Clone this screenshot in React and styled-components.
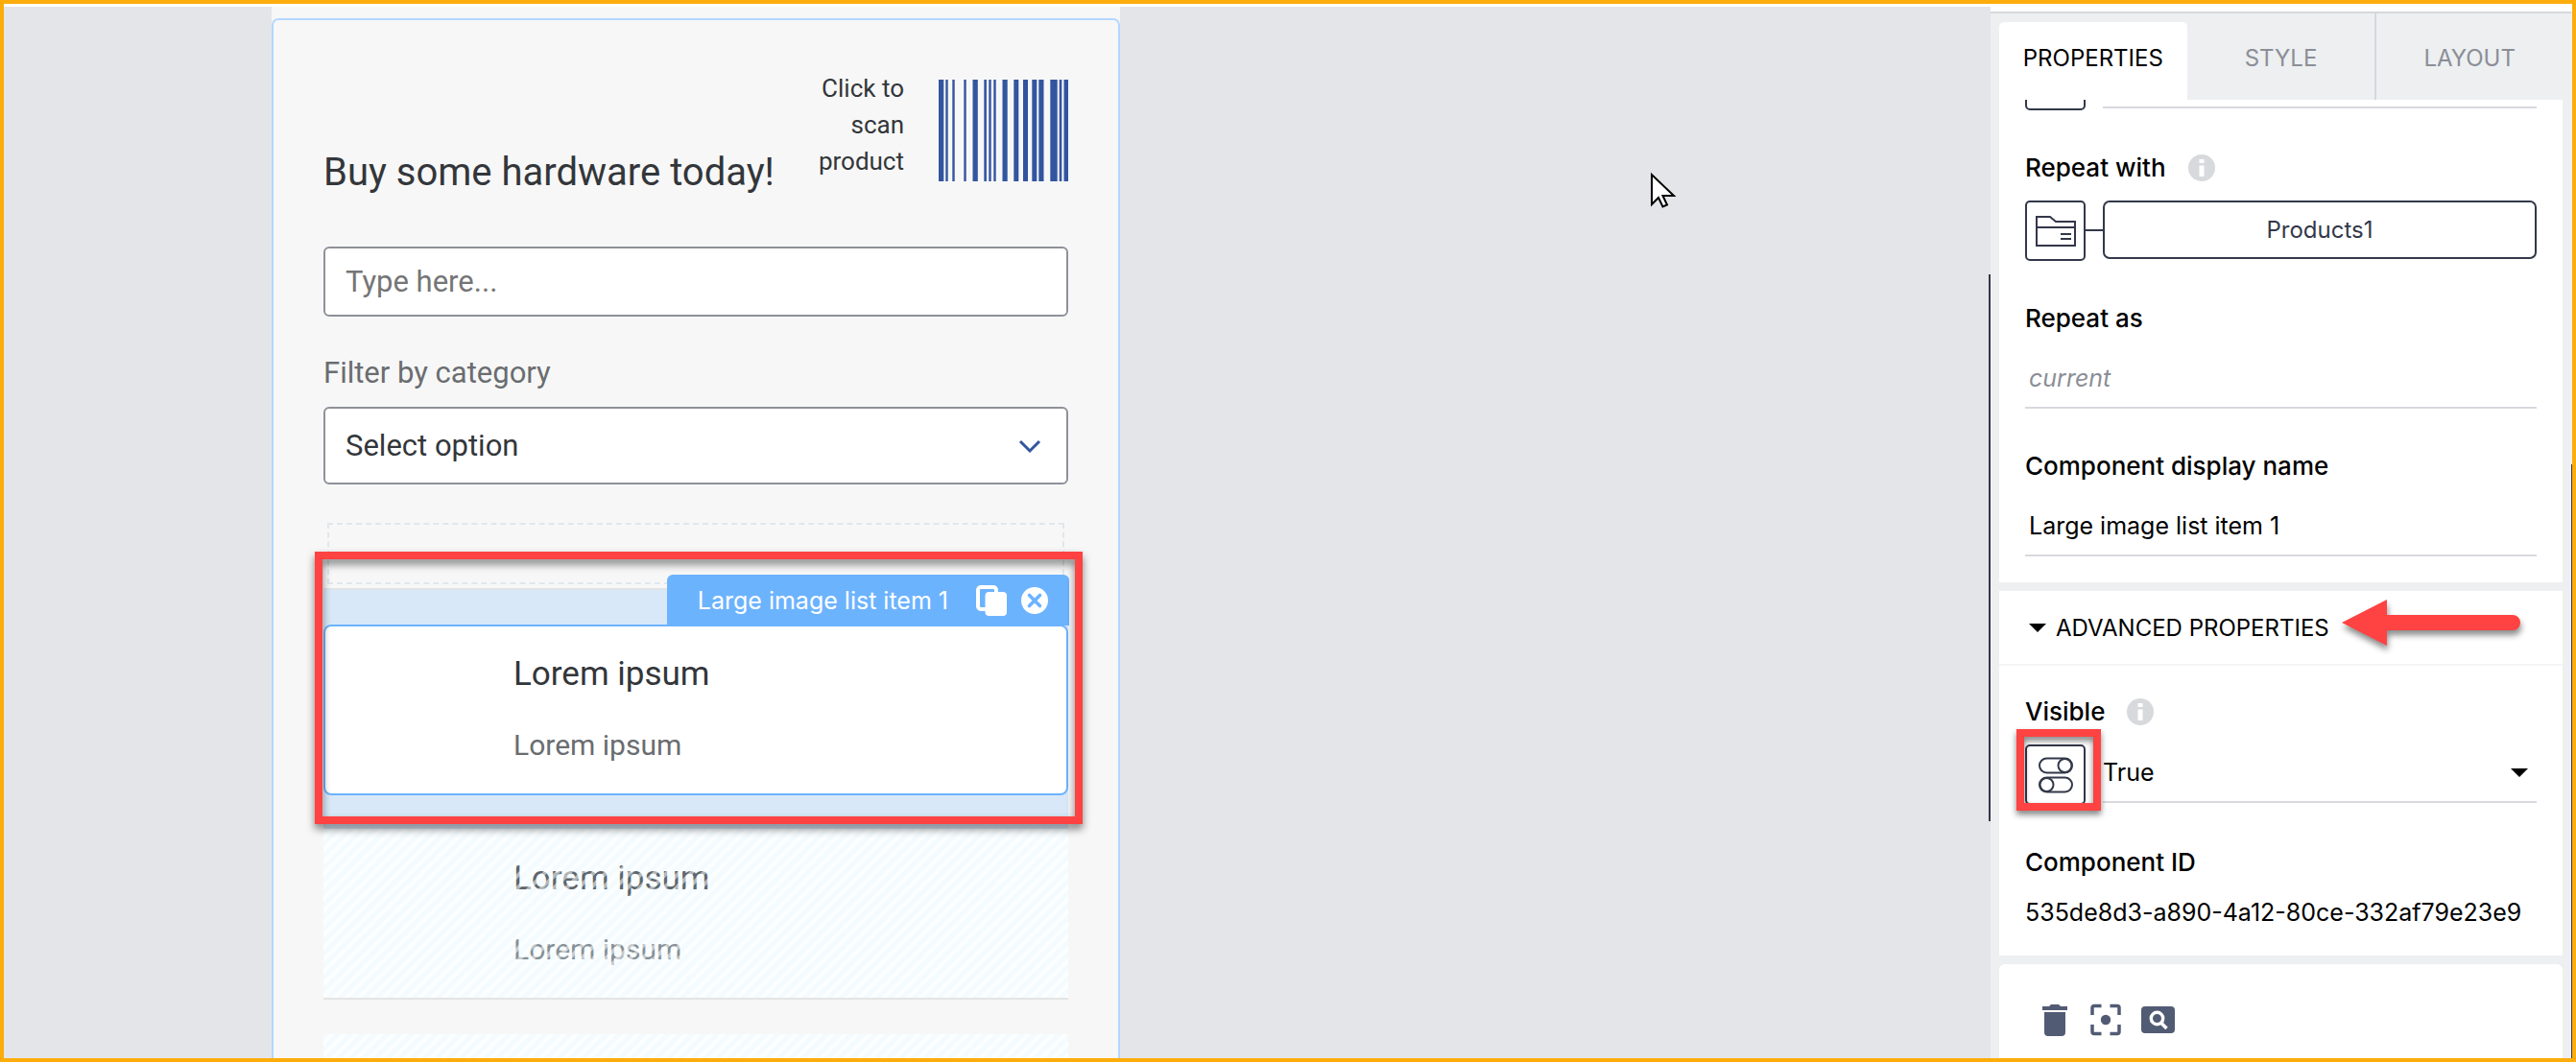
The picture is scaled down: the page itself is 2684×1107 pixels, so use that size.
import React from "react";
import styled, { createGlobalStyle, css } from "styled-components";

const ink = "#33384a";
const line = "#d8d9df";
const red = "#ff4242";
const sky = "#6cb3fe";

const GlobalStyle = createGlobalStyle`
  *, *::before, *::after { box-sizing: border-box; }
  body { margin: 0; }
  button, input, select { font: inherit; color: inherit; margin: 0; }
  h1, h2, p { margin: 0; font-weight: 400; }
`;

const Frame = styled.div`
  display: flex;
  height: 100vh;
  overflow: hidden;
  border: 4px solid #fcad0b;
  background: #fff;
`;

/* ---------- Canvas with the phone preview ---------- */

const Canvas = styled.main`
  position: relative;
  flex: 1;
  min-width: 0;
  display: flex;
  justify-content: space-between;
  padding-left: 279px;
  border-top: 3px solid #fff;
  background: #e4e5e9;
  font-family: Roboto, "Liberation Sans", sans-serif;
  overflow: hidden;
`;

const Device = styled.div`
  width: 884px;
  flex-shrink: 0;
  padding-top: 12px;
  background: #f7f7f7;
`;

const Screen = styled.section`
  padding: 52px 52px 0;
  border: 2px solid #b3d7ff;
  border-radius: 7px;
`;

const CanvasThumb = styled.div`
  width: 2px;
  height: 570px;
  margin-top: 279px;
  background: ${ink};
`;

const Pointer = styled.svg`
  position: absolute;
  left: 1715px;
  top: 172px;
  width: 28px;
  height: 40px;
`;

const ScreenHeader = styled.header`
  display: flex;
  align-items: flex-end;
  min-height: 131px;
  margin-bottom: 53px;
`;

const Heading = styled.h1`
  flex: 1;
  font-size: 40px;
  line-height: 48px;
  white-space: nowrap;
  color: #33363a;
`;

const ScanButton = styled.button`
  display: flex;
  align-items: flex-start;
  align-self: flex-start;
  gap: 36px;
  padding: 0;
  border: 0;
  background: none;
  font-size: 26px;
  line-height: 38px;
  text-align: right;
  color: #33363a;
`;

const ScanText = styled.span`
  width: 104px;
`;

const Barcode = styled.svg`
  width: 135px;
  height: 106px;
  margin-top: 10px;
  fill: #32559f;
`;

const boxed = css`
  width: 100%;
  padding: 0 21px;
  border: 2px solid #8e9199;
  border-radius: 6px;
  background: #fff;
  font-size: 31px;
`;

const SearchBox = styled.input`
  ${boxed}
  display: block;
  height: 73px;
  margin-bottom: 39px;
  &::placeholder { color: #757575; opacity: 1; }
`;

const FilterLabel = styled.label`
  display: block;
  margin-bottom: 15px;
  font-size: 31px;
  line-height: 40px;
  color: #6a6d70;
`;

const SelectWrap = styled.div`
  display: grid;
  align-items: center;
  margin-bottom: 40px;
  > * { grid-area: 1 / 1; }
`;

const FilterSelect = styled.select`
  ${boxed}
  height: 81px;
  appearance: none;
  color: #33363a;
`;

const Chevron = styled.svg`
  justify-self: end;
  width: 24px;
  height: 16px;
  margin-right: 28px;
  fill: none;
  stroke: #32559f;
  stroke-width: 3;
  pointer-events: none;
`;

const DropZone = styled.div`
  height: 64px;
  margin: 0 4px 4px;
  border: 2px dashed #dfe7ec;
`;

const List = styled.div`
  display: flex;
  flex-direction: column;
`;

const Selection = styled.div`
  position: relative;
  z-index: 1;
  padding: 36px 0 35px;
  border-top: 2px solid #e0e4e7;
  background: #d8e8f8;
`;

const Highlight = styled.div`
  position: absolute;
  inset: -40px -15px 5px -9px;
  border: 8px solid ${red};
  filter: drop-shadow(0 5px 4px rgba(0, 0, 0, 0.5));
  pointer-events: none;
`;

const Chip = styled.div`
  position: absolute;
  top: -16px;
  right: -1px;
  display: flex;
  align-items: center;
  height: 53px;
  padding: 0 22px 0 32px;
  border-radius: 6px 6px 0 0;
  background: ${sky};
  color: #fff;
  font-family: Inter, "Liberation Sans", sans-serif;
  font-size: 25px;
  white-space: nowrap;
`;

const ChipButton = styled.button`
  display: flex;
  margin-left: ${(p) => (p.$first ? 29 : 15)}px;
  padding: 0;
  border: 0;
  background: none;
`;

const Item = styled.article`
  position: relative;
  height: 178px;
  padding: 28px 0 0 198px;
  background: #fff;
  ${(p) =>
    p.$selected
      ? css`
          border-radius: 8px;
          box-shadow: inset 0 0 0 2px ${sky};
        `
      : css`
          margin-bottom: 36px;
          border-bottom: 2px solid #e4e4e4;
          &::after {
            content: "";
            position: absolute;
            inset: 0;
            background: repeating-linear-gradient(
              135deg,
              rgba(214, 240, 252, 0.26) 0 4px,
              rgba(250, 254, 255, 0.64) 5px 8px,
              rgba(214, 240, 252, 0.26) 9px
            );
          }
        `}
`;

const ItemTitle = styled.h2`
  margin-bottom: 30px;
  font-size: 35px;
  line-height: 48px;
  color: #33363a;
`;

const ItemText = styled.p`
  font-size: 30px;
  line-height: 40px;
  color: #6a6d70;
`;

/* ---------- Properties panel ---------- */

const Panel = styled.aside`
  display: flex;
  flex-shrink: 0;
  width: 606px;
  border-top: 8px solid #fff;
  background: #edeff1;
  font-family: Inter, "Liberation Sans", sans-serif;
  font-size: 25px;
  color: #000;
`;

const PanelBody = styled.div`
  flex: 1;
  min-width: 0;
  display: flex;
  flex-direction: column;
  padding: 0 9px;
  border-top: 2px solid #d6d8dc;
`;

const PanelThumb = styled.div`
  width: 1px;
  margin-top: 472px;
  background: ${ink};
`;

const Tabs = styled.nav`
  display: grid;
  grid-template-columns: repeat(3, 1fr);
  flex-shrink: 0;
  height: 90px;
`;

const Tab = styled.button`
  padding: 2px 0 0;
  border: 0;
  background: none;
  font-size: 24px;
  color: #8b8e96;
  & + & + & { border-left: 2px solid #d6d8dc; }
  ${(p) =>
    p.$active &&
    css`
      margin-top: 9px;
      padding: 0 0 6px;
      border-radius: 5px 5px 0 0;
      background: #fff;
      color: #000;
    `}
`;

const Card = styled.section`
  flex-shrink: 0;
  margin-bottom: 9px;
  padding-bottom: 27px;
  background: #fff;
`;

const FieldGroup = styled.div`
  display: flex;
  flex-direction: column;
  gap: 44px;
  padding: ${(p) => p.$top}px 27px 0;
`;

const ScrolledRow = styled.div`
  display: flex;
  align-items: flex-end;
  height: 11px;
  overflow: hidden;
`;

const FieldHead = styled.div`
  display: flex;
  align-items: center;
  gap: 23px;
  height: 32px;
  margin-bottom: 18px;
`;

const labelText = css`
  font-size: 26px;
  font-weight: 500;
  line-height: 32px;
`;

const FieldLabel = styled.label`${labelText}`;
const FieldName = styled.span`${labelText}`;

const InfoIcon = styled.svg`
  width: 28px;
  height: 28px;
  fill: #d8d9dd;
`;

const ValueRow = styled.div`
  display: flex;
  flex: 1;
  align-items: flex-start;
  height: 63px;
`;

const KindButton = styled.button`
  position: relative;
  display: flex;
  align-items: center;
  justify-content: center;
  flex-shrink: 0;
  width: 63px;
  height: 63px;
  padding: 0;
  border: 2px solid ${ink};
  border-radius: 5px;
  background: #fff;
`;

const Link = styled.div`
  width: 18px;
  height: 2px;
  margin-top: 30px;
  background: ${(p) => (p.$on ? ink : "transparent")};
`;

const KindMark = styled.div`
  position: absolute;
  inset: -18px -18px -8px -11px;
  border: 8px solid ${red};
  filter: drop-shadow(0 4px 3px rgba(0, 0, 0, 0.5));
  pointer-events: none;
`;

const BindingButton = styled.button`
  flex: 1;
  height: 61px;
  padding: 0;
  border: 2px solid ${ink};
  border-radius: 7px;
  background: #fff;
  font-size: 24px;
  color: ${ink};
`;

const Underlined = styled.div`
  flex: 1;
  display: grid;
  align-items: center;
  height: 61px;
  border-bottom: 2px solid ${line};
  > * { grid-area: 1 / 1; }
`;

const PlainSelect = styled.select`
  width: 100%;
  height: 59px;
  padding: 0 0 2px;
  border: 0;
  background: none;
  appearance: none;
`;

const Caret = styled.svg`
  justify-self: end;
  width: 18px;
  height: 9px;
  margin-right: ${(p) => (p.$inSelect ? 9 : 0)}px;
  pointer-events: none;
`;

const TextField = styled.input`
  display: block;
  width: 100%;
  height: 60px;
  padding: 0 4px 2px;
  border: 0;
  border-bottom: 2px solid ${line};
  background: none;
  &::placeholder { color: #8b8e96; font-style: italic; opacity: 1; }
`;

const SectionToggle = styled.button`
  position: relative;
  display: flex;
  align-items: center;
  gap: 10px;
  width: 100%;
  height: 78px;
  padding: 0 31px;
  border: 0;
  border-bottom: 2px solid #f4f5f6;
  background: none;
  font-size: 24px;
`;

const Arrow = styled.svg`
  position: absolute;
  top: 5px;
  left: 353px;
  width: 200px;
  height: 62px;
  filter: drop-shadow(1px 5px 3px rgba(0, 0, 0, 0.45));
`;

const IdText = styled.p`
  line-height: 36px;
  white-space: nowrap;
`;

const ActionBar = styled.footer`
  flex: 1;
  display: flex;
  align-items: flex-start;
  gap: 19px;
  padding: 38px 41px 0;
  border-radius: 6px 6px 0 0;
  background: #fff;
`;

const ActionButton = styled.button`
  display: flex;
  padding: 0;
  border: 0;
  background: none;
  color: #525b74;
`;

const bars = [
  [0, 5.3], [7.3, 2.4], [14.3, 2.4], [26.3, 2.4], [35.5, 5.3], [47.3, 2.6],
  [52.3, 2.4], [57.3, 2.4], [66.5, 5.2], [78.3, 5], [88, 5], [97.3, 5],
  [104.3, 5.2], [116.3, 7.4], [125.7, 2.6], [130.5, 4.5],
];

const Info = () => (
  <InfoIcon viewBox="0 0 28 28" aria-hidden="true">
    <circle cx="14" cy="14" r="14" />
    <path fill="#fff" d="M11.5 5h5v4h-5zM11.5 11.5h5V23h-5z" />
  </InfoIcon>
);

const Triangle = ({ inSelect }) => (
  <Caret viewBox="0 0 18 9" $inSelect={inSelect} aria-hidden="true">
    <path d="M0 0h18L9 9z" />
  </Caret>
);

const ListItem = ({ selected, title, text }) => (
  <Item $selected={selected}>
    <ItemTitle>{title}</ItemTitle>
    <ItemText>{text}</ItemText>
  </Item>
);

const PhonePreview = () => (
  <Device>
    <Screen>
      <ScreenHeader>
        <Heading>Buy some hardware today!</Heading>
        <ScanButton type="button">
          <ScanText>Click to scan product</ScanText>
          <Barcode viewBox="0 0 135 106" aria-hidden="true">
            {bars.map(([x, w]) => (
              <rect key={x} x={x} width={w} height="106" />
            ))}
          </Barcode>
        </ScanButton>
      </ScreenHeader>
      <SearchBox type="text" placeholder="Type here..." aria-label="Search" />
      <FilterLabel htmlFor="category">Filter by category</FilterLabel>
      <SelectWrap>
        <FilterSelect id="category">
          <option>Select option</option>
        </FilterSelect>
        <Chevron viewBox="0 0 24 16" aria-hidden="true">
          <path d="M2 3l10 10L22 3" />
        </Chevron>
      </SelectWrap>
      <DropZone />
      <List>
        <Selection>
          <ListItem selected title="Lorem ipsum" text="Lorem ipsum" />
          <Chip>
            Large image list item 1
            <ChipButton type="button" $first aria-label="Duplicate">
              <svg width="32" height="32" viewBox="0 0 32 32">
                <path
                  fill="none"
                  stroke="#fff"
                  strokeWidth="4"
                  d="M10 25H5a3 3 0 0 1-3-3V5a3 3 0 0 1 3-3h13a3 3 0 0 1 3 3v4"
                />
                <rect x="9.500" y="7" width="22.500" height="25" rx="4" fill="#fff" />
              </svg>
            </ChipButton>
            <ChipButton type="button" aria-label="Remove">
              <svg width="28" height="28" viewBox="0 0 28 28">
                <circle cx="14" cy="14" r="14" fill="#fff" />
                <path
                  d="M8.500 8.500l11 11m0-11l-11 11"
                  stroke={sky}
                  strokeWidth="3.600"
                  strokeLinecap="round"
                />
              </svg>
            </ChipButton>
          </Chip>
          <Highlight />
        </Selection>
        <ListItem title="Lorem ipsum" text="Lorem ipsum" />
        <ListItem />
      </List>
    </Screen>
  </Device>
);

export default function App() {
  return (
    <>
      <GlobalStyle />
      <Frame>
        <Canvas>
          <PhonePreview />
          <CanvasThumb />
          <Pointer viewBox="0 0 28 40" aria-hidden="true">
            <path
              d="M2 3v31l7-7 4.500 9.500 4.500-2-4.500-9.500H25z"
              fill="#fff"
              stroke="#000"
              strokeWidth="2"
            />
          </Pointer>
        </Canvas>

        <Panel>
          <PanelBody>
            <Tabs>
              <Tab type="button" $active>PROPERTIES</Tab>
              <Tab type="button">STYLE</Tab>
              <Tab type="button">LAYOUT</Tab>
            </Tabs>

            <Card>
              <FieldGroup $top={0}>
                <ScrolledRow>
                  <ValueRow>
                    <KindButton type="button" aria-label="Binding type" />
                    <Link />
                    <Underlined />
                  </ValueRow>
                </ScrolledRow>
                <div>
                  <FieldHead>
                    <FieldName>Repeat with</FieldName>
                    <Info />
                  </FieldHead>
                  <ValueRow>
                    <KindButton type="button" aria-label="Data variable">
                      <svg width="42" height="34" viewBox="0 0 42 34" fill="none" stroke={ink} strokeWidth="2">
                        <path d="M1 32V2h14l6 5h20v25zM1 13h40M26 20h11M26 25h11" />
                      </svg>
                    </KindButton>
                    <Link $on />
                    <BindingButton type="button">Products1</BindingButton>
                  </ValueRow>
                </div>
                <div>
                  <FieldHead>
                    <FieldLabel htmlFor="repeat-as">Repeat as</FieldLabel>
                  </FieldHead>
                  <TextField id="repeat-as" type="text" placeholder="current" />
                </div>
                <div>
                  <FieldHead>
                    <FieldLabel htmlFor="display-name">Component display name</FieldLabel>
                  </FieldHead>
                  <TextField id="display-name" type="text" defaultValue="Large image list item 1" />
                </div>
              </FieldGroup>
            </Card>

            <Card>
              <SectionToggle type="button">
                <Triangle />
                ADVANCED PROPERTIES
                <Arrow viewBox="0 0 200 62" aria-hidden="true">
                  <path
                    fill={red}
                    d="M4 28L51 4V20H182A8 8 0 0 1 182 36H51V52z"
                  />
                </Arrow>
              </SectionToggle>
              <FieldGroup $top={32}>
                <div>
                  <FieldHead>
                    <FieldLabel htmlFor="visible">Visible</FieldLabel>
                    <Info />
                  </FieldHead>
                  <ValueRow>
                    <KindButton type="button" aria-label="Static toggle">
                      <svg width="38" height="38" viewBox="0 0 38 38" fill="none" stroke={ink} strokeWidth="2">
                        <rect x="2" y="1.500" width="34" height="15" rx="7.500" />
                        <circle cx="28.500" cy="9" r="7" />
                        <rect x="2" y="21.500" width="34" height="15" rx="7.500" />
                        <circle cx="9.500" cy="29" r="7" />
                      </svg>
                      <KindMark />
                    </KindButton>
                    <Link />
                    <Underlined>
                      <PlainSelect id="visible">
                        <option>True</option>
                      </PlainSelect>
                      <Triangle inSelect />
                    </Underlined>
                  </ValueRow>
                </div>
                <div>
                  <FieldHead>
                    <FieldName>Component ID</FieldName>
                  </FieldHead>
                  <IdText>535de8d3-a890-4a12-80ce-332af79e23e9</IdText>
                </div>
              </FieldGroup>
            </Card>

            <ActionBar>
              <ActionButton type="button" aria-label="Delete">
                <svg width="34" height="38" viewBox="0 0 34 38" fill="currentColor">
                  <path d="M4 6h7l2-2h8l2 2h7v4H4zM6 12h22v21a4 4 0 0 1-4 4H10a4 4 0 0 1-4-4z" />
                </svg>
              </ActionButton>
              <ActionButton type="button" aria-label="Focus">
                <svg width="34" height="38" viewBox="0 0 34 38">
                  <path
                    fill="none"
                    stroke="currentColor"
                    strokeWidth="3.500"
                    d="M3 15V7.500a2 2 0 0 1 2-2h7.500M21.500 5.500H29a2 2 0 0 1 2 2V15M31 25v7.500a2 2 0 0 1-2 2h-7.500M12.500 34.500H5a2 2 0 0 1-2-2V25"
                  />
                  <circle cx="17" cy="20" r="5.200" fill="currentColor" />
                </svg>
              </ActionButton>
              <ActionButton type="button" aria-label="Inspect">
                <svg width="38" height="38" viewBox="0 0 38 38">
                  <rect x="1" y="6" width="35" height="28" rx="4" fill="currentColor" />
                  <circle cx="17.500" cy="18.500" r="6.200" fill="none" stroke="#fff" strokeWidth="3.400" />
                  <path d="M21.500 23l6 6" stroke="#fff" strokeWidth="3.600" />
                </svg>
              </ActionButton>
            </ActionBar>
          </PanelBody>
          <PanelThumb />
        </Panel>
      </Frame>
    </>
  );
}
